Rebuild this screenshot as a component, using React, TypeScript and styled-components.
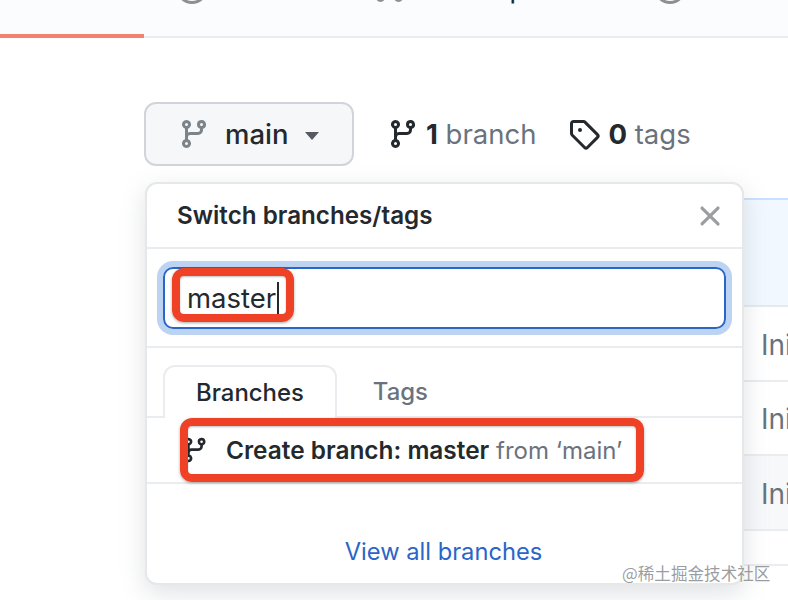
import React from 'react';
import styled, { createGlobalStyle } from 'styled-components';

const branchPath =
  'M11.75 2.5a.75.75 0 100 1.5.75.75 0 000-1.5zm-2.25.75a2.25 2.25 0 113 2.122V6A2.5 2.5 0 0110 8.5H6a1 1 0 00-1 1v1.128a2.251 2.251 0 11-1.5 0V5.372a2.25 2.25 0 111.5 0v1.836A2.492 2.492 0 016 7h4a1 1 0 001-1v-.628A2.25 2.25 0 019.5 3.25zM4.25 12a.75.75 0 100 1.5.75.75 0 000-1.5zM3.5 3.25a.75.75 0 111.5 0 .75.75 0 01-1.5 0z';
const tagPath =
  'M2.5 7.775V2.75a.25.25 0 01.25-.25h5.025a.25.25 0 01.177.073l6.25 6.25a.25.25 0 010 .354l-5.025 5.025a.25.25 0 01-.354 0l-6.25-6.25a.25.25 0 01-.073-.177zm-1.5 0V2.75C1 1.784 1.784 1 2.75 1h5.025c.464 0 .91.184 1.238.513l6.25 6.25a1.75 1.75 0 010 2.474l-5.026 5.026a1.75 1.75 0 01-2.474 0l-6.25-6.25A1.75 1.75 0 011 7.775zM6 5a1 1 0 100 2 1 1 0 000-2z';
const closePath =
  'M3.72 3.72a.75.75 0 011.06 0L8 6.94l3.22-3.22a.75.75 0 111.06 1.06L9.06 8l3.22 3.22a.75.75 0 11-1.06 1.06L8 9.06l-3.22 3.22a.75.75 0 01-1.06-1.06L6.94 8 3.72 4.78a.75.75 0 010-1.06z';
const circlePath = 'M8 1.5a6.5 6.5 0 100 13 6.5 6.5 0 000-13zM0 8a8 8 0 1116 0A8 8 0 010 8z';
const pullPath =
  'M7.177 3.073L9.573.677A.25.25 0 0110 .854v4.792a.25.25 0 01-.427.177L7.177 3.427a.25.25 0 010-.354zM3.75 2.5a.75.75 0 100 1.5.75.75 0 000-1.5zm-2.25.75a2.25 2.25 0 113 2.122v5.256a2.251 2.251 0 11-1.5 0V5.372A2.25 2.25 0 011.5 3.25zM11 2.5h-1V4h1a1 1 0 011 1v5.628a2.251 2.251 0 101.5 0V5A2.5 2.5 0 0011 2.5zm1 10.25a.75.75 0 111.5 0 .75.75 0 01-1.5 0zM3.75 12a.75.75 0 100 1.5.75.75 0 000-1.5z';

const Icon = ({ d, size, color }: { d: string; size: number; color: string }) => (
  <svg width={size} height={size} viewBox="0 0 16 16" fill={color} style={{ flex: 'none' }}>
    <path fillRule="evenodd" d={d} />
  </svg>
);

const App = () => {
  return (
    <Page>
      <GlobalStyle />
      <TabBar>
        <Tab $left={176}>
          <Icon d={circlePath} size={32} color="#8b9095" />
          <TabLabel>Issues</TabLabel>
        </Tab>
        <Tab $left={68}>
          <Icon d={pullPath} size={32} color="#8b9095" />
          <TabLabel>Pull requests</TabLabel>
        </Tab>
        <Tab $left={66}>
          <Icon d={circlePath} size={32} color="#8b9095" />
          <TabLabel>Actions</TabLabel>
        </Tab>
        <ActiveMark />
      </TabBar>

      <Content>
        <Toolbar>
          <BranchButton>
            <Icon d={branchPath} size={32} color="#7c8389" />
            <BranchName>main</BranchName>
            <Caret />
          </BranchButton>
          <Stat $gap={7} $left={33}>
            <Icon d={branchPath} size={32} color="#24292e" />
            <StatText>
              <b>1</b> branch
            </StatText>
          </Stat>
          <Stat $gap={8} $left={32}>
            <Icon d={tagPath} size={32} color="#24292e" />
            <StatText>
              <b>0</b> tags
            </StatText>
          </Stat>
        </Toolbar>

        <FileTable>
          <TableHead />
          <TableRow>Initial commit</TableRow>
          <TableRow>Initial commit</TableRow>
          <TableRow $hover>Initial commit</TableRow>
          <TableFoot />
        </FileTable>

        <Dropdown>
          <DropHeader>
            <DropTitle>Switch branches/tags</DropTitle>
            <Icon d={closePath} size={34} color="#9a9ea3" />
          </DropHeader>
          <FilterArea>
            <FilterInput>
              master
              <Cursor />
            </FilterInput>
          </FilterArea>
          <TabsRow>
            <DropTab $active>Branches</DropTab>
            <DropTab>Tags</DropTab>
          </TabsRow>
          <CreateRow>
            <Icon d={branchPath} size={28} color="#24292e" />
            <CreateText>
              <b>Create branch: master</b> <span>from ‘main’</span>
            </CreateText>
          </CreateRow>
          <ViewAll>View all branches</ViewAll>
          <InputMark />
          <RowMark />
        </Dropdown>
      </Content>

      <Watermark>@稀土掘金技术社区</Watermark>
    </Page>
  );
};

export default App;

const GlobalStyle = createGlobalStyle`
  html, body {
    margin: 0;
    padding: 0;
    background: #ffffff;
  }
  * {
    box-sizing: border-box;
  }
`;

const Page = styled.div`
  position: relative;
  width: 788px;
  height: 600px;
  overflow: hidden;
  background: #ffffff;
  font-family: Inter, 'Liberation Sans', sans-serif;
  color: #24292e;
`;

const TabBar = styled.div`
  position: relative;
  display: flex;
  align-items: flex-start;
  height: 38px;
  overflow: hidden;
  background: #fbfcfd;
  box-shadow: inset 0 -2px 0 #eaecef;
`;

const Tab = styled.div<{ $left: number }>`
  display: flex;
  align-items: center;
  gap: 12px;
  flex: none;
  height: 32px;
  margin-top: -28.5px;
  margin-left: ${(p) => p.$left}px;
  font-size: 28px;
  line-height: 32px;
  color: #24292e;
`;

const TabLabel = styled.span`
  white-space: nowrap;
`;

const ActiveMark = styled.div`
  position: absolute;
  left: 0;
  bottom: 0;
  width: 144px;
  height: 4px;
  background: #f0826f;
`;

const Content = styled.div`
  position: relative;
  padding: 64px 0 0 144px;
`;

const Toolbar = styled.div`
  display: flex;
  align-items: center;
  height: 64px;
`;

const BranchButton = styled.div`
  display: flex;
  align-items: center;
  width: 210px;
  height: 64px;
  padding-left: 32px;
  background: #f5f7f9;
  border: 2px solid #d1d5da;
  border-radius: 12px;
`;

const BranchName = styled.span`
  margin-left: 15px;
  font-size: 27.5px;
  font-weight: 500;
`;

const Caret = styled.span`
  width: 0;
  height: 0;
  margin: 4px 0 0 16px;
  border-left: 7.5px solid transparent;
  border-right: 7.5px solid transparent;
  border-top: 8px solid #555a60;
`;

const Stat = styled.div<{ $gap: number; $left: number }>`
  display: flex;
  align-items: center;
  gap: ${(p) => p.$gap}px;
  margin-left: ${(p) => p.$left}px;
`;

const StatText = styled.span`
  font-size: 27.5px;
  color: #6a737d;
  white-space: nowrap;

  b {
    font-weight: 700;
    color: #24292e;
  }
`;

const FileTable = styled.div`
  margin: 32px 0 0 1px;
  border-left: 2px solid #e1e4e8;
`;

const TableHead = styled.div`
  height: 109px;
  background: #f1f8ff;
  border-top: 2px solid #c8e1ff;
  border-bottom: 2px solid #e6eaee;
`;

const TableRow = styled.div<{ $hover?: boolean }>`
  display: flex;
  align-items: center;
  height: 74.5px;
  padding: 3px 0 0 614px;
  font-size: 28px;
  white-space: nowrap;
  color: #6a737d;
  background: ${(p) => (p.$hover ? '#f6f8fa' : '#ffffff')};
  border-bottom: 2px solid #eaecef;
`;

const TableFoot = styled.div`
  height: 35px;
  border-bottom: 2px solid #eaecef;
`;

const Dropdown = styled.div`
  position: absolute;
  left: 145px;
  top: 144px;
  width: 599px;
  height: 403px;
  background: #ffffff;
  border: 2px solid #e5e7e9;
  border-radius: 12px;
  box-shadow: 0 8px 24px rgba(149, 157, 165, 0.3);
`;

const DropHeader = styled.div`
  display: flex;
  align-items: center;
  justify-content: space-between;
  height: 65px;
  padding: 0 15px 0 30px;
  border-bottom: 2px solid #eaecef;
`;

const DropTitle = styled.span`
  font-size: 24.2px;
  font-weight: 600;
`;

const FilterArea = styled.div`
  height: 99px;
  padding: 18px 16px;
  border-bottom: 2px solid #eaecef;
`;

const FilterInput = styled.div`
  display: flex;
  align-items: center;
  height: 62px;
  padding-left: 22px;
  font-size: 27.5px;
  border: 2px solid #2a66c7;
  border-radius: 10px;
  box-shadow: 0 0 0 6px #bcd3f2;
`;

const Cursor = styled.span`
  width: 1.5px;
  height: 33px;
  margin-left: 1px;
  background: #24292e;
`;

const TabsRow = styled.div`
  display: flex;
  align-items: flex-end;
  gap: 3px;
  height: 70px;
  padding-left: 16px;
  border-bottom: 2px solid #eaecef;
`;

const DropTab = styled.div<{ $active?: boolean }>`
  display: flex;
  align-items: center;
  justify-content: center;
  height: ${(p) => (p.$active ? '53px' : '51px')};
  margin-bottom: ${(p) => (p.$active ? '-2px' : '0')};
  padding: 0 31px;
  font-size: 23.9px;
  font-weight: 500;
  color: ${(p) => (p.$active ? '#24292e' : '#6a737d')};
  background: ${(p) => (p.$active ? '#ffffff' : 'transparent')};
  border: 2px solid ${(p) => (p.$active ? '#eaecef' : 'transparent')};
  border-bottom: 0;
  border-radius: 12px 12px 0 0;
`;

const CreateRow = styled.div`
  display: flex;
  align-items: center;
  gap: 17px;
  height: 66px;
  padding-left: 34px;
  border-bottom: 2px solid #eaecef;
`;

const CreateText = styled.span`
  font-size: 24px;
  white-space: nowrap;

  b {
    font-size: 24.4px;
    font-weight: 600;
  }

  span {
    color: #6a737d;
  }
`;

const ViewAll = styled.div`
  margin-top: 53px;
  padding-right: 2px;
  text-align: center;
  font-size: 23.7px;
  color: #2a66c7;
`;

const Mark = styled.div`
  position: absolute;
  border: 8px solid #ee4125;
  border-radius: 12px;
  box-shadow: 0 1px 3px rgba(0, 0, 0, 0.35), inset 0 1px 2px rgba(0, 0, 0, 0.25);
`;

const InputMark = styled(Mark)`
  left: 25px;
  top: 84px;
  width: 122px;
  height: 54px;
`;

const RowMark = styled(Mark)`
  left: 33px;
  top: 234px;
  width: 464px;
  height: 64px;
`;

const Watermark = styled.div`
  position: absolute;
  left: 622px;
  top: 561px;
  font-family: 'Noto Sans CJK SC', sans-serif;
  font-size: 16.6px;
  line-height: 24px;
  white-space: nowrap;
  color: rgba(120, 125, 130, 0.75);
  text-shadow: 0 0 4px rgba(255, 255, 255, 0.8);
`;
